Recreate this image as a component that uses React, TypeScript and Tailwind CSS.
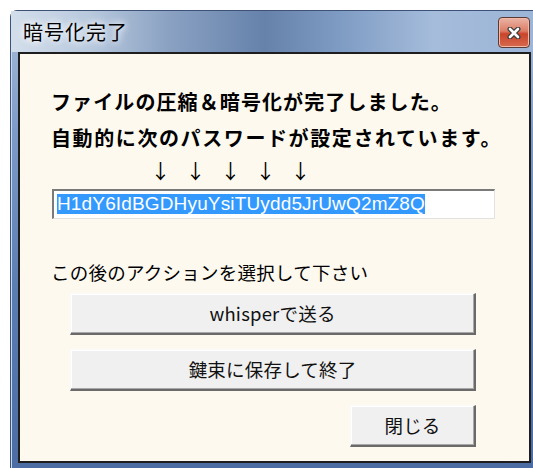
import { useState } from "react";

// 暗号化完了ダイアログ
const jp = "font-['Noto_Sans_CJK_JP','Noto_Sans',sans-serif]";

const WinButton = ({ label, className }: { label: string; className: string }) => (
  <button
    className={`${className} h-[42px] bg-[#f0f0f0] border-t border-l border-t-[#fafafa] border-l-[#fafafa] border-r-2 border-b-2 border-r-[#6a6a6a] border-b-[#6a6a6a] shadow-[inset_-1px_-1px_0_#a8a8a8,inset_1px_1px_0_#ffffff] text-[18.5px] leading-none tracking-[0.2px] text-[#111] flex items-center justify-center ${jp}`}
  >
    {label}
  </button>
);

const CloseIcon = () => (
  <svg width="14" height="12" viewBox="0 0 14 12">
    <path d="M3 2 L11 10 M11 2 L3 10" stroke="#3a3a3a" strokeWidth="5" strokeLinecap="round" />
    <path d="M3 2 L11 10 M11 2 L3 10" stroke="#ffffff" strokeWidth="2.6" strokeLinecap="round" />
  </svg>
);

export default function App() {
  const [password] = useState("H1dY6IdBGDHyuYsiTUydd5JrUwQ2mZ8Q");

  return (
    <div className="w-[533px] h-[468px] bg-white overflow-hidden pt-[10px] pl-[10px]">
      {/* ウィンドウ枠 */}
      <div className="w-[530px] h-[470px] rounded-t-[7px] border border-[#3d5276] px-[7px] flex flex-col bg-[linear-gradient(to_bottom,#a9bdd9_0%,#7e9cc8_25%,#5a7db2_60%,#4a6ca3_100%)] shadow-[inset_1px_0_0_#c9d8ec]">
        {/* タイトルバー */}
        <div className="h-[41px] flex items-center justify-between pl-[5px] pr-[1px] -mx-[7px] px-[7px] bg-[linear-gradient(to_right,#d3deeb_0%,#b8c9de_15%,#8aa1c2_30%,#6682ab_48%,#7e9bc3_62%,#a5bcdb_80%,#9cb4d6_100%)]">
          <span className={`ml-[7px] text-[20px] tracking-[1px] text-black [text-shadow:0_0_6px_#fff,0_0_10px_#fff] ${jp}`}>
            暗号化完了
          </span>
          <div className="w-[32px] h-[31px] mr-[8px] mt-[2px] rounded-[4px] border border-[#5b3a33] shadow-[inset_0_0_0_1px_#f2b8a8] bg-[linear-gradient(to_bottom,#eab4a6_0%,#dc7d66_45%,#c9442b_55%,#d86a4d_100%)] flex items-center justify-center">
            <CloseIcon />
          </div>
        </div>

        {/* クライアント領域 */}
        <div className="w-[513px] h-[411px] shrink-0 border-2 border-[#1e1e1e] bg-[#fdf9ef] pl-[31px] flex flex-col">
          <p className={`mt-[36px] text-[20px] leading-[24px] font-bold tracking-[1.1px] text-black ${jp}`}>
            ファイルの圧縮＆暗号化が完了しました。
          </p>
          <p className={`mt-[12px] text-[20px] leading-[24px] font-bold tracking-[1.6px] text-black ${jp}`}>
            自動的に次のパスワードが設定されています。
          </p>
          <div className={`mt-[10px] ml-[92px] h-[22px] flex text-[20px] leading-[22px] text-black ${jp}`}>
            {[0, 1, 2, 3, 4].map((i) => (
              <span key={i} className="w-[35px] text-center">
                ↓
              </span>
            ))}
          </div>

          {/* パスワード欄 */}
          <div className="mt-[7px] ml-[1px] w-[443px] h-[30px] bg-white border-t-2 border-l-2 border-t-[#7a7a7a] border-l-[#7a7a7a] border-r border-b border-r-[#e2e2e2] border-b-[#e2e2e2] pl-[3px] pt-[1px]">
            <span className="inline-block bg-[#3399ff] text-white text-[19px] leading-[20px] tracking-[0.15px] font-['Liberation_Sans',Arial,sans-serif]">
              {password}
            </span>
          </div>

          <p className={`mt-[41px] text-[18.5px] leading-[24px] tracking-[0.25px] text-black ${jp}`}>
            この後のアクションを選択して下さい
          </p>

          <div className="ml-[19px] w-[406px] flex flex-col items-end">
            <WinButton label="whisperで送る" className="mt-[9px] w-full" />
            <WinButton label="鍵束に保存して終了" className="mt-[14px] w-full" />
            <WinButton label="閉じる" className="mt-[14px] w-[126px]" />
          </div>
        </div>
      </div>
    </div>
  );
}
